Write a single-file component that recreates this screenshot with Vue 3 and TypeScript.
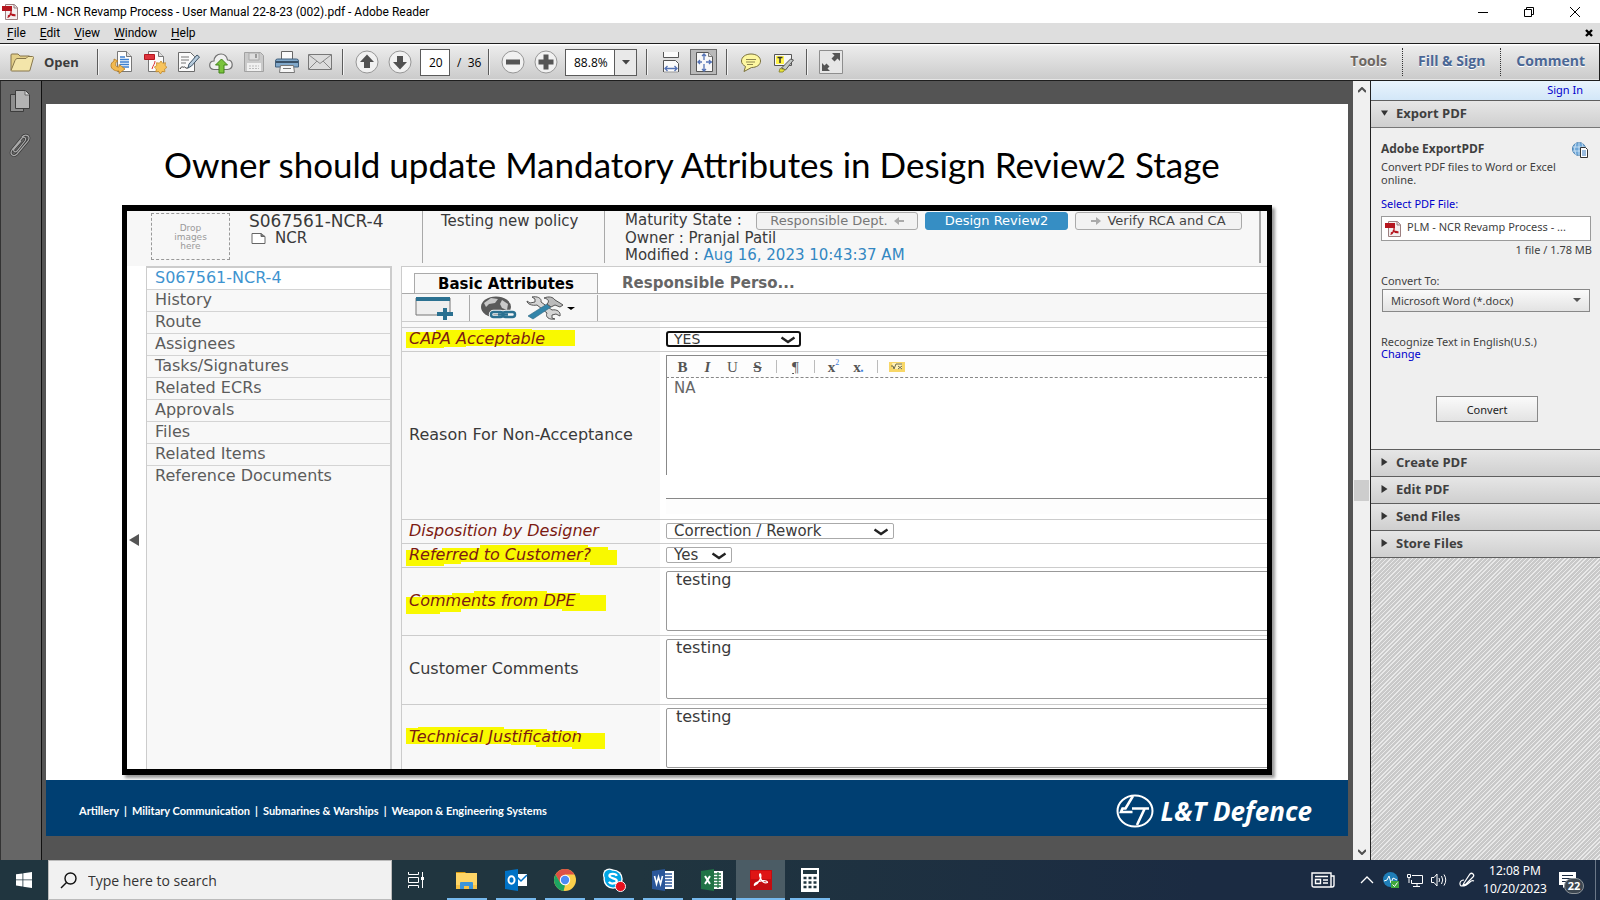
<script setup lang="ts">
import { ref } from 'vue'

interface Highlight { label: string; id: string; width: number; points: string }

const menus = ['File', 'Edit', 'View', 'Window', 'Help']
const sideItems = [
  'S067561-NCR-4', 'History', 'Route', 'Assignees', 'Tasks/Signatures',
  'Related ECRs', 'Approvals', 'Files', 'Related Items', 'Reference Documents',
]
const closedPanels = ['Create PDF', 'Edit PDF', 'Send Files', 'Store Files']
const businesses = ['Artillery', 'Military Communication', 'Submarines & Warships', 'Weapon & Engineering Systems']

const pageNumber = ref('20')
const zoomLevel = ref('88.8%')
const capa = ref('YES')
const disposition = ref('Correction / Rework')
const referred = ref('Yes')
const reason = ref('NA')
const dpeComments = ref('testing')
const customerComments = ref('testing')
const justification = ref('testing')
const search = ref('')

const marks: Record<string, Highlight> = {
  capa: { label: 'CAPA Acceptable', id: 'capa', width: 169, points: '0,3 30,3 30,1 75,1 75,0 126,0 126,1 169,1 169,17 60,17 60,18 38,18 38,19 0,19' },
  referred: { label: 'Referred to Customer?', id: 'referred', width: 211, points: '0,5 36,5 36,3 74,3 74,0 182,0 182,2 202,2 202,5 211,5 211,20 184,20 184,17 55,17 55,19 38,19 38,21 0,21' },
  dpe: { label: 'Comments from DPE', id: 'dpe', width: 200, points: '0,6 16,6 16,4 46,4 46,2 68,2 68,0 141,0 141,2 174,2 174,4 200,4 200,20 156,20 156,18 55,18 55,21 34,21 34,23 0,23' },
  tech: { label: 'Technical Justification', id: 'tech', width: 199, points: '0,1 12,1 12,0 98,0 98,2 141,2 141,4 171,4 171,6 199,6 199,22 166,22 166,20 130,20 130,18 105,18 105,17 0,17' },
}
</script>

<template>
  <div class="screen">
    <header class="titlebar">
      <svg class="pdf-icon" viewBox="0 0 16 16"><path d="M3.500.5h9l3 3v12h-12z" fill="#f4f0f0" stroke="#9c7f80" /><path d="M12 .5v3.500h3.500" fill="#ddd" stroke="#9c7f80" /><path d="M0 2h10v5H0z" fill="#b5161f" /><path d="M5.500 13.500c3-1.500 4-5 3.500-7M8 9c1.500 2 3.500 3 5.500 2.500M6 12c2-1.500 5-2 7.500-1" fill="none" stroke="#b5161f" stroke-width="1.300" /></svg>
      <h1>PLM - NCR Revamp Process - User Manual 22-8-23 (002).pdf - Adobe Reader</h1>
      <div class="win-buttons">
        <button aria-label="Minimize"><svg viewBox="0 0 12 12"><path d="M1 6.500h10" stroke="#000" /></svg></button>
        <button aria-label="Restore"><svg viewBox="0 0 12 12" fill="none" stroke="#000"><path d="M1.500 3.500h7v7h-7zM3.500 3.500v-2h7v7h-2" /></svg></button>
        <button aria-label="Close"><svg viewBox="0 0 12 12" stroke="#000"><path d="M1 1l10 10M11 1L1 11" /></svg></button>
      </div>
    </header>

    <nav class="menubar">
      <button v-for="m in menus" :key="m"><u>{{ m[0] }}</u>{{ m.slice(1) }}</button>
      <button class="doc-close" aria-label="Close document"><svg viewBox="0 0 8 8"><path d="M1 1l6 6M7 1L1 7" stroke="#000" stroke-width="2.400" /></svg></button>
    </nav>

    <div class="toolbar">
      <button class="open-btn">
        <svg viewBox="0 0 24 20" width="24" height="20"><path d="M1 18V3q0-1 1-1h6l2 2h9q1 0 1 1v3" fill="#e3cf88" stroke="#86754a" /><path d="M1 18.500L5 8.500q.5-1.500 2-2h9l2-2h4.500q1 0 1 1L20 18q0 1-1 1H2q-1 0-1-.5z" fill="#f3e5aa" stroke="#86754a" /></svg>
        Open
      </button>
      <i class="sep"></i>
      <button class="tool" aria-label="Convert"><svg viewBox="0 0 24 24"><path d="M7.500 1.500h9l5 5v15h-14z" fill="#fdfdfd" stroke="#777" /><path d="M16.500 1.500v5h5" fill="#ddd" stroke="#777" /><path d="M10 7h5M10 9.500h9M10 12h9M10 14.500h9M12 17h7" stroke="#3c7fcf" stroke-width="1.300" /><path d="M4 11c-4 2-4 7 0 9 2 1 3 1 5 1v2.500l6-4.500-6-4.500V17c-3 0-4-1-3-5l2-1-4-2z" fill="#f2b950" stroke="#b47b21" stroke-width=".8" /></svg></button>
      <button class="tool" aria-label="Create PDF"><svg viewBox="0 0 24 24"><path d="M5.500 1.500h10l5 5v15h-15z" fill="#fbfbfb" stroke="#777" /><path d="M15.500 1.500v5h5" fill="#ddd" stroke="#777" /><path d="M1.500 4.500h10v5h-10z" fill="#dd343d" stroke="#b4161f" /><path d="M9 19c1-4 3-5 3-8" stroke="#d33" fill="none" /><path d="M18 11l1.700 2.300 2.800-.6-.5 2.800 2 1.800-2.400 1.700.3 2.800-2.900-.3L17.500 24l-1.700-2.400-3 .2.600-2.800-2.100-1.900 2.400-1.500-.2-2.900 2.900.5z" fill="#f8c45c" stroke="#c48a2b" stroke-width=".8" /></svg></button>
      <button class="tool" aria-label="Sign"><svg viewBox="0 0 24 24"><path d="M2.500 2.500h12l4 4v15h-16z" fill="#fafafa" stroke="#6b6b6b" /><path d="M5 7h8M5 10h8M5 13h5" stroke="#777" /><path d="M4 19c2-4 3-1 4-2s1 2 4 1" fill="none" stroke="#333" /><path d="M12 18l1-4 8-9 2.500 2-8 9z" fill="#b7cbdc" stroke="#3f5568" /></svg></button>
      <button class="tool" aria-label="Upload"><svg viewBox="0 0 24 24"><path d="M5 19.500C-1 19.500-.5 11 5 11c0-4 3-7 7-7s6 3 6.500 6c6 0 6.500 9 0 9.500z" fill="#f0f0f0" stroke="#707070" stroke-width="1.200" /><path d="M12.500 9l6 6h-3.500v8h-5v-8H6.500z" fill="#79c33c" stroke="#43831b" /></svg></button>
      <button class="tool" aria-label="Save"><svg viewBox="0 0 24 24"><path d="M2.500 2.500h16l3 3v16h-19z" fill="#cacaca" stroke="#a2a2a2" /><path d="M7 3h10v7H7z" fill="#dedede" stroke="#aaa" /><path d="M13 4h2v4h-2z" fill="#999" /><path d="M5 13h14v8H5z" fill="#f0f0f0" /><path d="M7 16h10M7 18.500h10" stroke="#bbb" stroke-dasharray="2 1" /></svg></button>
      <button class="tool" aria-label="Print"><svg viewBox="0 0 24 24"><path d="M6.500 1.500h11v8h-11z" fill="#fafafa" stroke="#666" /><path d="M2.500 9h19q2 0 2 2v6H.5v-6q0-2 2-2z" fill="#81a8ca" stroke="#43617d" /><path d="M1 12h22" stroke="#3a5268" stroke-width="2" /><path d="M5.500 15.500h13l1 7h-15z" fill="#f7f7f7" stroke="#777" /><path d="M8 18.500h8" stroke="#777" /></svg></button>
      <button class="tool" aria-label="Email"><svg viewBox="0 0 24 24"><path d="M.5 4.500h23v15H.5z" fill="#dcdcdc" stroke="#777" /><path d="M1 5l11 8.500L23 5M1 19l8-8M23 19l-8-8" fill="none" stroke="#888" /></svg></button>
      <i class="sep"></i>
      <button class="tool" aria-label="Previous page"><svg viewBox="0 0 24 24"><circle cx="12" cy="12" r="11" fill="#f1f1f1" stroke="#969696" /><path d="M12 4.500l7 7.500h-4v6H9v-6H5z" fill="#505050" /></svg></button>
      <button class="tool" aria-label="Next page"><svg viewBox="0 0 24 24"><circle cx="12" cy="12" r="11" fill="#f1f1f1" stroke="#969696" /><path d="M12 19.500L5 12h4V6h6v6h4z" fill="#505050" /></svg></button>
      <input v-model="pageNumber" class="page-input" aria-label="Page number" />
      <span class="page-total">/&nbsp; 36</span>
      <i class="sep"></i>
      <button class="tool" aria-label="Zoom out"><svg viewBox="0 0 24 24"><circle cx="12" cy="12" r="11" fill="#f1f1f1" stroke="#969696" /><path d="M5 9.500h14v5H5z" fill="#555" /></svg></button>
      <button class="tool" aria-label="Zoom in"><svg viewBox="0 0 24 24"><circle cx="12" cy="12" r="11" fill="#f1f1f1" stroke="#969696" /><path d="M4.500 9.500h5v-5h5v5h5v5h-5v5h-5v-5h-5z" fill="#555" /></svg></button>
      <div class="zoom-combo">
        <input v-model="zoomLevel" aria-label="Zoom level" />
        <button aria-label="Zoom levels"><svg viewBox="0 0 8 5" width="8" height="5"><path d="M0 0h8L4 4.500z" fill="#444" /></svg></button>
      </div>
      <i class="sep"></i>
      <button class="tool" aria-label="Fit width"><svg viewBox="0 0 24 24" fill="#fbfbfb" stroke="#555"><path d="M4.500 2v5.500h15V2" /><path d="M4.500 22V10.500h12l3 3V22" /><path d="M5 22h14" stroke="#999" /><path d="M6 18.500h12M8.500 16L6 18.500 8.500 21M15.500 16l2.500 2.500-2.500 2.500" fill="none" stroke="#5573b5" stroke-width="1.300" /></svg></button>
      <button class="tool selected" aria-label="Fit page"><svg viewBox="0 0 24 24"><path d="M4.500 2.500h12l4 4v15h-16z" fill="#f8f8f8" stroke="#555" /><path d="M16.500 2.500v4h4" fill="#ddd" stroke="#777" /><path d="M12 4v6M12 14v7M5.500 12H10M14 12h6M10 6l2-2 2 2M10 19l2 2 2-2M8 10l-2 2 2 2M17 10l2 2-2 2" fill="none" stroke="#5573b5" stroke-width="1.300" /></svg></button>
      <i class="sep"></i>
      <button class="tool" aria-label="Comment"><svg viewBox="0 0 24 24"><path d="M12 4c5.500 0 9.500 3 9.500 7s-4 6.500-9 6.500L5 21.500l1.500-5C4 15 2.500 13.500 2.500 11c0-4 4-7 9.500-7z" fill="#fdf7a0" stroke="#79703b" /><path d="M7 9.500h10M7 12h9M8 14.500h6" stroke="#8d8650" /></svg></button>
      <button class="tool" aria-label="Highlight text"><svg viewBox="0 0 24 24"><path d="M2.500 4.500h17v11h-17z" fill="#f7f7f7" stroke="#555" /><path d="M4 6h8v8H4z" fill="#fff34a" /><path d="M5.500 7.500h5M8 7.500V13" stroke="#333" stroke-width="1.500" /><path d="M9.500 18l9-9 3 1-8 10z" fill="#c3c7c5" stroke="#555" /><path d="M8 18.500l5 1-2 2.500H7z" fill="#e9e43c" stroke="#807b22" stroke-width=".8" /></svg></button>
      <i class="sep"></i>
      <button class="tool" aria-label="Read mode"><svg viewBox="0 0 24 24"><path d="M.5.5h23v23H.500z" fill="#e6e6e6" stroke="#8e8e8e" /><path d="M13 3h8v8l-2.500-2.500-3 3-3-3 3-3zM3 21v-8l2.500 2.500 2-2 3 3-2 2L11 21z" fill="#555" /></svg></button>
      <div class="panes">
        <button class="tools-on">Tools</button>
        <button>Fill &amp; Sign</button>
        <button>Comment</button>
      </div>
    </div>

    <div class="workspace">
      <aside class="rail">
        <button aria-label="Page thumbnails"><svg viewBox="0 0 22 24" width="22" height="24"><path d="M1.500 5.500h13v17h-13z" fill="#8e8e8e" stroke="#3d3d3d" /><path d="M6.500 1.500h10l4 4v14h-14z" fill="#b3b3b3" stroke="#3d3d3d" /><path d="M16 2v4h4" fill="#ddd" stroke="#666" /></svg></button>
        <button aria-label="Attachments"><svg viewBox="0 0 22 24" width="22" height="24" fill="none"><path d="M3 17L13 5c2-2 5 0 3 3L8 18c-2 2-4 0-3-2l7-8M3 17c-3 5 2 7 5 4L19 8c3-5-2-8-6-4" stroke="#363636" stroke-width="2.600" /><path d="M3 17L13 5c2-2 5 0 3 3L8 18c-2 2-4 0-3-2l7-8M3 17c-3 5 2 7 5 4L19 8c3-5-2-8-6-4" stroke="#aaa" stroke-width="1.200" /></svg></button>
      </aside>

      <main class="canvas">
        <article class="slide">
          <h2>Owner should update Mandatory Attributes in Design Review2 Stage</h2>

          <section class="shot">
            <div class="record-head">
              <div class="drop">Drop<br />images<br />here</div>
              <div class="record-name">
                <strong>S067561-NCR-4</strong>
                <span><svg viewBox="0 0 15 11" width="15" height="11"><path d="M1 .5h9l4 3v7H1z" fill="#fff" stroke="#666" /><path d="M10 .5v3h4" fill="#777" stroke="#666" /></svg>NCR</span>
              </div>
              <div class="policy">Testing new policy</div>
              <div class="record-meta">
                <div class="state-line">
                  <span>Maturity State :</span>
                  <button class="chip dim">Responsible Dept. <svg viewBox="0 0 10 8" width="10" height="8"><path d="M0 4l5-4v3h5v2H5v3z" fill="#aaa" /></svg></button>
                  <button class="chip active">Design Review2</button>
                  <button class="chip"><svg viewBox="0 0 10 8" width="10" height="8"><path d="M10 4L5 0v3H0v2h5v3z" fill="#aaa" /></svg> Verify RCA and CA</button>
                </div>
                <div>Owner : Pranjal Patil</div>
                <div>Modified : <a href="#">Aug 16, 2023 10:43:37 AM</a></div>
              </div>
            </div>

            <div class="record-body">
              <button class="collapse" aria-label="Collapse"><svg viewBox="0 0 10 12" width="10" height="12"><path d="M10 0v12L0 6z" fill="#555" /></svg></button>
              <nav class="side">
                <a v-for="(s, i) in sideItems" :key="s" href="#" :class="{ current: i === 0 }">{{ s }}</a>
              </nav>
              <div class="content">
                <div class="tabs">
                  <button class="tab on">Basic Attributes</button>
                  <button class="tab">Responsible Perso...</button>
                </div>
                <div class="actions">
                  <button aria-label="New window"><svg viewBox="0 0 38 24" width="38" height="24"><path d="M1 2h34v17H1z" fill="#eee" stroke="#777" /><path d="M1 1h34v4H1z" fill="#2b7191" /><path d="M22 16h6v-4h4v4h6v4h-6v4h-4v-4h-6z" fill="#2b7191" /></svg></button>
                  <i></i>
                  <button aria-label="Web link"><svg viewBox="0 0 38 24" width="38" height="24"><ellipse cx="17" cy="11" rx="15" ry="10.500" fill="#5a5a5a" /><path d="M5 7l7-5 7 1-3 4-6 1-3 3zM23 4l6 4-1 6-5-2-2-4z" fill="#c9c9c9" /><g fill="none" stroke="#f7f7f7" stroke-width="4.500"><rect x="12" y="16" width="12" height="5" rx="2.500" /><rect x="24" y="16" width="12" height="5" rx="2.500" /></g><g fill="none" stroke="#2b7191" stroke-width="2.500"><rect x="12" y="16" width="12" height="5" rx="2.500" /><rect x="24" y="16" width="12" height="5" rx="2.500" /><path d="M19 18.500h10" /></g></svg></button>
                  <button aria-label="Tools"><svg viewBox="0 0 50 24" width="50" height="24"><path d="M1 5l3 2 5-1V3L6 1c5-1 10 1 9 5l11 8c5-1 9 2 8 6l-4-2-4 1v3l3 1c-6 1-10-2-8-6L11 9C6 10 1 8 1 5z" fill="#d5d5d5" stroke="#555" /><path d="M2 20L21 8l4 3L7 23z" fill="#3385aa" stroke="#2b6580" stroke-width=".6" /><path d="M18 2c5-2 9-1 11 2l5 3 3 2-3 2-5-2-4 2-4-3c3-3 1-5-3-6z" fill="#bbb" stroke="#555" /><path d="M41 11h8l-4 3z" fill="#000" /></svg></button>
                  <i></i>
                </div>

                <form class="attrs" @submit.prevent>
                  <div class="gap-label"></div><div class="gap-field"></div>

                  <div class="label must"><label :for="marks.capa.id"><svg :width="marks.capa.width" height="19" class="mark"><polygon :points="marks.capa.points" fill="#f9f900" /></svg><span>{{ marks.capa.label }}</span></label></div>
                  <div class="field">
                    <div class="pick focus capa"><select id="capa" v-model="capa"><option>YES</option><option>NO</option></select><svg viewBox="0 0 16 8"><path d="M1.500 1.500L8 6l6.500-4.500" fill="none" stroke="#222" stroke-width="2.400" /></svg></div>
                  </div>

                  <div class="label"><label for="reason">Reason For Non-Acceptance</label></div>
                  <div class="field">
                    <div class="editor">
                      <div class="editor-tools">
                        <button type="button"><b>B</b></button><button type="button"><b><em>I</em></b></button><button type="button">U</button><button type="button"><s><b>S</b></s></button><i></i>
                        <button type="button" class="para"><u>¶</u></button><i></i>
                        <button type="button"><b>x</b><sup>2</sup></button><button type="button"><b>x</b><sub>▪</sub></button><i></i>
                        <button type="button" aria-label="Symbols"><svg viewBox="0 0 16 10" width="16" height="10"><path d="M0 0h16v10H0z" fill="#f8d767" /><path d="M3 1h10v6H4z" fill="#fff1b8" /><path d="M2 4h2l1 3 2-5h6M9 4l4 3M13 4l-4 3" fill="none" stroke="#6d6a48" /></svg></button>
                      </div>
                      <textarea id="reason" v-model="reason"></textarea>
                      <div class="editor-foot"></div>
                    </div>
                  </div>

                  <div class="label must"><label for="disposition">Disposition by Designer</label></div>
                  <div class="field">
                    <div class="pick disposition"><select id="disposition" v-model="disposition"><option>Correction / Rework</option></select><svg viewBox="0 0 16 8"><path d="M1.500 1.500L8 6l6.500-4.500" fill="none" stroke="#222" stroke-width="2.400" /></svg></div>
                  </div>

                  <div class="label must"><label :for="marks.referred.id"><svg :width="marks.referred.width" height="21" class="mark"><polygon :points="marks.referred.points" fill="#f9f900" /></svg><span>{{ marks.referred.label }}</span></label></div>
                  <div class="field">
                    <div class="pick referred"><select id="referred" v-model="referred"><option>Yes</option><option>No</option></select><svg viewBox="0 0 16 8"><path d="M1.500 1.500L8 6l6.500-4.500" fill="none" stroke="#222" stroke-width="2.400" /></svg></div>
                  </div>

                  <div class="label must"><label :for="marks.dpe.id"><svg :width="marks.dpe.width" height="23" class="mark"><polygon :points="marks.dpe.points" fill="#f9f900" /></svg><span>{{ marks.dpe.label }}</span></label></div>
                  <div class="field"><textarea id="dpe" v-model="dpeComments" class="memo"></textarea></div>

                  <div class="label"><label for="customer">Customer Comments</label></div>
                  <div class="field"><textarea id="customer" v-model="customerComments" class="memo"></textarea></div>

                  <div class="label must"><label :for="marks.tech.id"><svg :width="marks.tech.width" height="23" class="mark"><polygon :points="marks.tech.points" fill="#f9f900" /></svg><span>{{ marks.tech.label }}</span></label></div>
                  <div class="field"><textarea id="tech" v-model="justification" class="memo"></textarea></div>
                </form>
              </div>
            </div>
          </section>

          <footer class="slide-foot">
            <p><template v-for="(b, i) in businesses" :key="b"><span v-if="i">|</span><span>{{ b }}</span></template></p>
            <div class="brand">
              <svg viewBox="0 0 38 34" width="38" height="34"><ellipse cx="19" cy="17" rx="17.500" ry="15.500" fill="none" stroke="#fff" stroke-width="2" /><path d="M17 2L9.500 14.500h-3L5 18h11.500M16 14.500h17M28.500 15L21 31" fill="none" stroke="#fff" stroke-width="2.600" /></svg>
              <span>L&amp;T Defence</span>
            </div>
          </footer>
        </article>
      </main>

      <div class="scrollbar">
        <svg viewBox="0 0 8 6" width="8" height="6"><path d="M0 5l4-4 4 4" fill="none" stroke="#505050" stroke-width="2" /></svg>
        <div class="track"><div class="thumb"></div></div>
        <svg viewBox="0 0 8 6" width="8" height="6"><path d="M0 1l4 4 4-4" fill="none" stroke="#505050" stroke-width="2" /></svg>
      </div>

      <aside class="panel">
        <div class="signin"><a href="#">Sign In</a></div>
        <button class="fold opened"><svg viewBox="0 0 8 6" width="8" height="6"><path d="M0 0h8L4 6z" fill="#333" /></svg>Export PDF</button>
        <div class="export">
          <svg class="globe" viewBox="0 0 17 16" width="17" height="16"><circle cx="7" cy="7" r="6.500" fill="#6ea7d8" stroke="#4a7fae" /><path d="M1 5h12M1 9h12M7 0v14M4 1q-3 6 0 12M10 1q3 6 0 12" fill="none" stroke="#e4f0fa" stroke-width=".7" /><path d="M8.500 5.500h5l2 2v8h-7z" fill="#fff" stroke="#333" /><path d="M10 9h4M10 11h4M10 13h4" stroke="#3779bd" /></svg>
          <h3>Adobe ExportPDF</h3>
          <p class="desc">Convert PDF files to Word or Excel online.</p>
          <p class="select-file"><a href="#">Select PDF File:</a></p>
          <div class="file">
            <svg class="pdf-icon" viewBox="0 0 16 16"><path d="M3.500.5h9l3 3v12h-12z" fill="#f4f0f0" stroke="#9c7f80" /><path d="M12 .5v3.500h3.500" fill="#ddd" stroke="#9c7f80" /><path d="M0 2h10v5H0z" fill="#b5161f" /><path d="M5.500 13.500c3-1.500 4-5 3.500-7M8 9c1.500 2 3.500 3 5.500 2.500M6 12c2-1.500 5-2 7.500-1" fill="none" stroke="#b5161f" stroke-width="1.300" /></svg>
            <span>PLM - NCR Revamp Process - ...</span>
          </div>
          <p class="size">1 file / 1.78 MB</p>
          <label for="format">Convert To:</label>
          <div class="format"><select id="format"><option>Microsoft Word (*.docx)</option></select><svg viewBox="0 0 8 5" width="8" height="5"><path d="M0 0h8L4 4z" fill="#555" /></svg></div>
          <p class="recognize">Recognize Text in English(U.S.)<br /><a href="#">Change</a></p>
          <button class="convert">Convert</button>
        </div>
        <button v-for="p in closedPanels" :key="p" class="fold"><svg viewBox="0 0 6 8" width="6" height="8"><path d="M0 0v8l6-4z" fill="#333" /></svg>{{ p }}</button>
        <div class="hatch"></div>
      </aside>
    </div>

    <footer class="taskbar">
      <button class="start" aria-label="Start"><svg viewBox="0 0 16 16" width="16" height="16" fill="#fff"><path d="M0 2.300l6.500-.9v6.100H0zM7.300 1.300L16 0v7.500H7.300zM0 8.300h6.500v6.200L0 13.600zM7.300 8.300H16V16l-8.700-1.300z" /></svg></button>
      <label class="searchbox"><svg viewBox="0 0 17 17" width="17" height="17" fill="none" stroke="#111" stroke-width="1.400"><circle cx="10.500" cy="6.500" r="5.500" /><path d="M6.500 10.500L1 16" /></svg><input v-model="search" placeholder="Type here to search" aria-label="Search" /></label>
      <button class="app plain" aria-label="Task view"><svg viewBox="0 0 16 16" width="16" height="16" fill="none" stroke="#fff"><path d="M.5 0v2.500h10V0M.5 5.500h10v5H.5zM.5 16v-2.500h10V16M14.500 0v16" /><path d="M13 5h3v3h-3z" fill="#fff" stroke="none" /></svg></button>
      <button class="app" aria-label="File Explorer"><svg viewBox="0 0 24 24"><path d="M1 4h9l2 2H1z" fill="#d99a0f" /><path d="M1 5h21v16H1z" fill="#ffd566" /><path d="M1 17h21v4H1z" fill="#f7c245" /><path d="M5 21v-6q0-1 1-1h11q1 0 1 1v6h-4v-3H9v3z" fill="#3b95db" /></svg></button>
      <button class="app" aria-label="Outlook"><svg viewBox="0 0 24 24"><path d="M12 6h11v12H12z" fill="#fff" /><path d="M12 8l5 5 6-6" fill="none" stroke="#0072c6" stroke-width="1.500" /><path d="M1 3l13-2v22L1 21z" fill="#0072c6" /><ellipse cx="7.500" cy="12" rx="3" ry="3.800" fill="none" stroke="#fff" stroke-width="2" /></svg></button>
      <button class="app" aria-label="Chrome"><svg viewBox="0 0 24 24"><circle cx="12" cy="12" r="11" fill="#fbd04b" /><path d="M2.500 6.500A11 11 0 0 1 21.500 6.500H12L7 15z" fill="#dd5144" /><path d="M2.500 6.500L7.200 14.800 12 17.500l-1.500 5.400A11 11 0 0 1 2.500 6.500z" fill="#1da462" /><circle cx="12" cy="12" r="5.200" fill="#fff" /><circle cx="12" cy="12" r="4.200" fill="#4c8bf5" /></svg></button>
      <button class="app" aria-label="Skype"><svg viewBox="0 0 26 26"><circle cx="8" cy="7.500" r="7" fill="#fff" /><circle cx="12" cy="12" r="10.500" fill="#fff" /><circle cx="8" cy="7.500" r="5.700" fill="#00a5e5" /><circle cx="12" cy="12" r="9" fill="#00a5e5" /><path d="M16 8.500c-1-3-8-3-8 0s8 2.500 8 5.500-7 4-8.500 1" fill="none" stroke="#fff" stroke-width="2.400" /><circle cx="20" cy="20" r="5.500" fill="#e8101e" stroke="#fff" /></svg></button>
      <button class="app" aria-label="Word"><svg viewBox="0 0 24 24"><path d="M12 3h11v18H12z" fill="#fff" /><path d="M14 6h7M14 9h7M14 12h7M14 15h7M14 18h7" stroke="#2b579a" stroke-width="1.300" /><path d="M1 3l13-2v22L1 21z" fill="#2b579a" /><path d="M3.500 8l2 8 2-7 2 7 2-8" fill="none" stroke="#fff" stroke-width="1.600" /></svg></button>
      <button class="app" aria-label="Excel"><svg viewBox="0 0 24 24"><path d="M12 3h11v18H12z" fill="#fff" /><path d="M14 6h7M14 9h7M14 12h7M14 15h7M14 18h7M18 4v16" stroke="#217346" stroke-width="1.300" /><path d="M1 3l13-2v22L1 21z" fill="#217346" /><path d="M5 8l5 8M10 8l-5 8" fill="none" stroke="#fff" stroke-width="2" /></svg></button>
      <button class="app running" aria-label="Adobe Reader"><svg viewBox="0 0 24 24"><path d="M1 2h22v20H1z" fill="#c40c10" /><path d="M2 3h20v8H2z" fill="#df1515" /><path d="M6 17c4-2 7-8 5.500-11-1.500-1-1 3 0 4 1 3 4 6 7 4.500 0-3-8-2-12 .5-2 2-1 3-.5 2z" fill="none" stroke="#fff" stroke-width="1.200" /></svg></button>
      <button class="app" aria-label="Calculator"><svg viewBox="0 0 24 24"><path d="M3 0h18v24H3z" fill="#fff" /><path d="M5 2h14v4H5z" fill="#20353f" /><path d="M5.500 10h13M5.500 14.500h13M5.500 19h13" stroke="#20353f" stroke-width="2.600" stroke-dasharray="3 2" /></svg></button>

      <div class="tray">
        <button class="news" aria-label="News"><svg viewBox="0 0 24 16" width="24" height="16" fill="none" stroke="#fff" stroke-width="1.400"><path d="M1 1h19v14H3q-2 0-2-2zM20 4h3v9q0 2-2 2h-2" /><path d="M4 4.500h13M12 8h5M12 11h5M4.500 7.500h5v4h-5z" /></svg></button>
        <button aria-label="Show hidden icons"><svg viewBox="0 0 16 16" width="16" height="16" fill="none" stroke="#fff" stroke-width="1.300"><path d="M2 11l6-6 6 6" /></svg></button>
        <button aria-label="Monitor agent"><svg viewBox="0 0 16 16" width="16" height="16"><circle cx="7.500" cy="7.500" r="7.500" fill="#1f7eb8" /><path d="M1 9l3-1 2-4 2 7 2-5 4 2" fill="none" stroke="#fff" /><path d="M8 9h8v7H8z" fill="#3fa63c" /><path d="M9.500 12.500l2 2 3-4" fill="none" stroke="#fff" /></svg></button>
        <button aria-label="Network"><svg viewBox="0 0 16 16" width="16" height="16" fill="none" stroke="#fff"><path d="M5 3.500h10.500v8h-11V8M10 12v2.500M6 14.500h7M.5 2.500h3v3h-3zM2 6v5" /></svg></button>
        <button aria-label="Volume"><svg viewBox="0 0 16 16" width="16" height="16" fill="none" stroke="#fff"><path d="M.5 5.500H3L6 2v12l-3-3.500H.500zM8 6q1 2 0 4M10.500 4q2.500 4 0 8M13 2.500q3.500 5.500 0 11" /></svg></button>
        <button class="pen" aria-label="Ink workspace"><svg viewBox="0 0 16 16" width="16" height="16" fill="none" stroke="#fff" stroke-width="1.200"><path d="M5 11L11 2q1.500-1.500 3 0t0 3L7 12l-3 1zM5 8C0 8 0 14 3 14s5-1 8-4q2-2 4-1" /></svg></button>
        <div class="clock"><span>12:08 PM</span><span>10/20/2023</span></div>
        <button class="notify" aria-label="Notifications"><svg viewBox="0 0 17 16" width="17" height="16"><path d="M0 0h17v13h-9l-4 3v-3H0z" fill="#fff" /><path d="M3 3.500h11M3 6.500h11M3 9.500h7" stroke="#1b2b42" stroke-width="1.200" /></svg><span>22</span></button>
        <i class="desk"></i>
      </div>
    </footer>
  </div>
</template>

<style>
body { margin: 0; background: #545454; }
</style>

<style scoped>
* { box-sizing: border-box; }
button { background: none; border: 0; padding: 0; margin: 0; font: inherit; color: inherit; cursor: default; }
a { text-decoration: none; color: #0000cc; }
p, h1, h2, h3 { margin: 0; font-weight: 400; }
svg { display: block; flex: none; }
input, select, textarea { font: inherit; color: inherit; margin: 0; border: 0; outline: 0; border-radius: 0; }
.screen { min-height: 100vh; display: flex; flex-direction: column; font-family: "Open Sans", "Noto Sans", sans-serif; font-size: 12px; color: #000; overflow: hidden; }
.pdf-icon { width: 16px; height: 16px; }

.titlebar { height: 23px; background: #fff; display: flex; align-items: center; padding-left: 2px; gap: 5px; }
.titlebar h1 { font-family: Roboto, sans-serif; font-size: 12px; line-height: 16px; white-space: nowrap; }
.win-buttons { margin-left: auto; display: flex; padding-right: 2px; }
.win-buttons button { width: 46px; height: 20px; display: flex; align-items: center; justify-content: center; }
.win-buttons svg { width: 12px; height: 12px; }

.menubar { height: 20px; background: #dedede; display: flex; align-items: center; padding-left: 7px; gap: 14px; font-family: Roboto, sans-serif; line-height: 16px; }
.menubar u { text-underline-offset: 2px; }
.doc-close { margin-left: auto; margin-right: 7px; }
.doc-close svg { width: 8px; height: 8px; }

.toolbar { height: 38px; border: 1px solid #1e1e1e; border-width: 1px 1px 1px 0; background: linear-gradient(#fff 1px, #ececec 2px, #cbcbcb 35px, #fff 36px); display: flex; align-items: center; padding: 0 12px 0 10px; }
.open-btn { display: flex; align-items: center; gap: 10px; width: 81px; font-weight: 700; font-size: 13px; color: #3c3c3c; }
.sep { flex: none; width: 2px; height: 26px; margin: 0 6px; background: #5c5c5c; border-right: 1px solid #f3f3f3; }
.tool { flex: none; width: 33px; height: 26px; display: flex; align-items: center; justify-content: center; }
.tool svg { width: 24px; height: 24px; }
.tool.selected { width: 27px; margin: 0 3px; background: #b9b9b9; border: 1px solid #6b6b6b; }
.page-input { width: 30px; height: 27px; margin-left: 4px; border: 1px solid #5b5b5b; background: #fff; padding: 0 0 0 8px; flex: none; }
.page-total { width: 32px; padding-left: 7px; white-space: nowrap; }
.zoom-combo { display: flex; width: 72px; height: 27px; margin: 0 3px; border: 1px solid #5b5b5b; background: #fff; flex: none; }
.zoom-combo input { width: 48px; padding: 0 0 0 8px; }
.zoom-combo button { flex: 1; border-left: 1px solid #5b5b5b; background: #e9e9e9; display: flex; align-items: center; justify-content: center; }
.panes { margin-left: auto; display: flex; font-weight: 700; font-size: 14px; line-height: 18px; color: #4b6795; white-space: nowrap; }
.panes button { height: 28px; padding: 0 15px 2px; border-left: 1px dotted #333; text-shadow: 0 1px #fff; }
.panes .tools-on { color: #6d6762; border: 0; }
.panes button:last-child { padding-right: 2px; }

.workspace { flex: 1; display: flex; background: #545454; }
.rail { width: 42px; background: #666; border-left: 1px solid #333; border-right: 1px solid #111; padding: 8px 0 0 8px; display: flex; flex-direction: column; gap: 20px; align-items: flex-start; }
.canvas { flex: 1; min-width: 0; padding: 23px 5px 24px 4px; }
.slide { background: #fff; }
.slide h2 { height: 101px; padding: 36px 0 0 118px; font-family: Lato, "Open Sans", sans-serif; font-size: 35px; line-height: 48px; white-space: nowrap; }

.shot { margin: 0 76px 5px; border: solid #000; border-width: 6px 5px; box-shadow: 3px 3px 3px #999; overflow: hidden; font-family: "DejaVu Sans", sans-serif; font-size: 15px; line-height: 18px; color: #3a3a3a; }
.record-head { display: flex; height: 55px; background: #f7f7f7; white-space: nowrap; border-bottom: 1px solid #f7f7f7; }
.drop { width: 79px; height: 47px; margin: 2px 19px 0 24px; border: 1px dashed #999; text-align: center; font-size: 9px; line-height: 9px; padding-top: 10px; color: #999; flex: none; }
.record-name { width: 174px; padding-top: 1px; display: flex; flex-direction: column; height: 52px; border-right: 1px solid #a9a9a9; flex: none; }
.record-name strong { font-weight: 400; font-size: 17px; line-height: 18px; }
.record-name span { display: flex; align-items: center; gap: 9px; padding-left: 2px; line-height: 16px; }
.policy { width: 182px; height: 52px; padding: 1px 0 0 18px; border-right: 1px solid #a9a9a9; flex: none; }
.record-meta { flex: 1; height: 52px; margin-right: 6px; padding: 0 0 0 20px; border-right: 2px solid #a9a9a9; line-height: 17px; }
.record-meta a { color: #3387c2; }
.state-line { display: flex; align-items: center; height: 19px; }
.state-line > span { width: 131px; }
.chip { display: flex; align-items: center; justify-content: center; gap: 6px; height: 18px; margin-right: 7px; border: 1px solid #aaa; border-radius: 3px; background: #f2f2f2; font-size: 13px; line-height: 14px; color: #444; }
.chip.dim { width: 162px; color: #777; }
.chip.active { width: 143px; background: #368ec4; border-color: #368ec4; color: #fff; }
.chip:last-child { width: 167px; }

.record-body { display: flex; height: 503px; }
.collapse { width: 19px; padding: 268px 0 0 2px; display: flex; align-items: flex-start; flex: none; }
.side { width: 246px; flex: none; border: 1px solid #ccc; border-width: 2px 2px 0 1px; background: #f8f8f8; display: flex; flex-direction: column; font-size: 16px; }
.side a { height: 22px; line-height: 20px; padding-left: 8px; border-bottom: 1px solid #d4d4d4; color: #5c5c5c; }
.side a:last-child { border: 0; }
.side .current { background: #fff; color: #3f94d0; }
.content { flex: 1; min-width: 0; margin-left: 9px; border-left: 1px solid #ccc; border-top: 1px solid #ccc; box-shadow: -9px 0 #f7f7f7; }
.tabs { height: 27px; display: flex; align-items: flex-end; padding-left: 12px; border-bottom: 1px solid #aaa; font-weight: 700; font-size: 15px; }
.tab { height: 20px; line-height: 18px; padding: 0 24px; color: #666; white-space: nowrap; }
.tab.on { width: 184px; padding: 0; border: 1px solid #aaa; border-bottom: 0; background: #f8f8f8; color: #000; }
.actions { height: 28px; background: #f7f7f7; border-bottom: 1px solid #ccc; display: flex; align-items: center; padding-left: 13px; }
.actions i { width: 1px; height: 26px; background: #aaa; margin-left: 16px; margin-right: 9px; }
.actions button + button { margin-left: 9px; }
.actions button + button + i { margin-left: 21px; }

.attrs { display: grid; grid-template-columns: 258px minmax(0, 1fr); grid-template-rows: 6px 24px 168px 24px 24px 68px 69px 65px; font-size: 16px; }
.gap-label, .gap-field, .label, .field { border-bottom: 1px solid #ccc; }
.gap-label, .label { background: #f8f8f8; }
.label { display: flex; align-items: center; padding-left: 7px; white-space: nowrap; }
.label label { position: relative; line-height: 18px; padding-bottom: 2px; }
.label span { position: relative; }
.label:nth-last-child(2), .field:last-child { border-bottom: 0; }
.must { font-style: italic; color: #7c1a12; }
.mark { position: absolute; left: -3px; top: -1px; }
.field { padding: 3px 0 0 6px; overflow: hidden; }
.pick { position: relative; height: 16px; border: 1px solid #aaa; border-radius: 2px; background: #fff; font-size: 15px; }
.pick select { appearance: none; display: block; width: 100%; height: 14px; background: none; padding: 0 0 0 7px; line-height: 14px; }
.pick svg { position: absolute; right: 4px; top: 4px; width: 16px; height: 8px; }
.capa { width: 135px; }
.focus { border: 2px solid #111; border-radius: 3px; font-size: 14px; }
.focus select { height: 12px; line-height: 12px; padding-left: 6px; }
.focus svg { top: 3px; right: 3px; }
.disposition { width: 228px; }
.referred { width: 66px; }
.editor { height: 160px; display: flex; flex-direction: column; }
.editor-tools { height: 22px; border-top: 1px solid #888; border-left: 1px solid #888; background: #fdfdfd; display: flex; align-items: center; padding-left: 3px; font-family: "Liberation Serif", serif; font-size: 15px; line-height: 16px; color: #555; }
.editor-tools button { width: 25px; display: flex; justify-content: center; align-items: center; }
.editor-tools i { width: 1px; height: 13px; background: #bbb; margin: 0 6px; }
.editor-tools sup, .editor-tools sub { font-size: 8px; line-height: 8px; color: #3d7fdc; }
.editor-tools sup { align-self: flex-start; }
.editor-tools sub { align-self: flex-end; }
.editor textarea { display: block; width: 100%; height: 98px; resize: none; border-top: 1px dashed #888; border-left: 1px solid #888; padding: 1px 7px; background: #fff; color: #666; overflow: hidden; font-size: 15px; }
.editor-foot { margin-top: 23px; height: 16px; border-top: 1px solid #888; background: #fdfdfd; }
.memo { display: block; width: 110%; height: 60px; resize: none; border: 1px solid #999; border-radius: 2px; padding: 0 9px; line-height: 16px; background: #fff; overflow: hidden; }

.slide-foot { height: 56px; background: #003f72; display: flex; align-items: center; justify-content: space-between; padding: 6px 36px 0 33px; color: #fff; }
.slide-foot p { display: flex; gap: 5px; font-family: Lato, sans-serif; font-weight: 700; font-size: 11px; line-height: 16px; white-space: nowrap; }
.brand { display: flex; align-items: center; gap: 7px; font-size: 26px; line-height: 30px; font-weight: 700; font-style: italic; white-space: nowrap; }

.scrollbar { width: 17px; background: #f0f0f0; display: flex; flex-direction: column; align-items: center; padding: 6px 0 5px; }
.track { flex: 1; align-self: stretch; padding: 387px 1px 0; }
.thumb { height: 21px; background: #cdcdcd; }

.panel { width: 230px; border-left: 1px solid #222; background: #efefef; display: flex; flex-direction: column; color: #3f3f3f; font-family: "Noto Sans", "Open Sans", sans-serif; font-size: 11px; line-height: 13px; flex: none; }
.signin { height: 19px; background: linear-gradient(#e9f4fd, #d3e7f8); text-align: right; padding: 2px 17px 0 0; }
.fold { flex: none; height: 27px; border-top: 1px solid #5e5e5e; background: linear-gradient(#e6e6e6, #cfcfcf); display: flex; align-items: center; gap: 8px; padding: 0 0 2px 10px; font-size: 13px; font-weight: 700; font-family: "Open Sans", sans-serif; }
.fold svg { width: 7px; }
.opened { height: 28px; border-bottom: 1px solid #777; }
.export { position: relative; height: 321px; padding: 13px 9px 0 10px; }
.export h3 { font-family: "Open Sans", sans-serif; font-weight: 700; font-size: 12px; line-height: 16px; }
.globe { position: absolute; right: 11px; top: 14px; }
.desc { margin-top: 3px; width: 190px; }
.select-file { margin-top: 11px; }
.file { margin-top: 6px; height: 25px; border: 1px solid #9a9a9a; background: #fff; display: flex; align-items: center; gap: 6px; padding-left: 3px; white-space: nowrap; }
.file span { padding-bottom: 4px; }
.size { text-align: right; margin: 2px -1px 18px 0; }
.format { position: relative; margin: 2px 1px 24px; }
.format select { appearance: none; display: block; width: 100%; height: 23px; border: 1px solid #888; padding: 0 8px; background: linear-gradient(#fafafa, #e3e3e3); }
.format svg { position: absolute; right: 9px; top: 9px; }
.recognize { line-height: 12px; white-space: nowrap; }
.convert { display: block; width: 102px; height: 26px; margin: 36px 0 0 55px; border: 1px solid #888; background: linear-gradient(#fafafa, #e3e3e3); color: #222; }
.hatch { flex: 1; border-top: 1px solid #5e5e5e; background: repeating-linear-gradient(135deg, #c9c9c9 0 2px, #e9e9e9 2px 3px); }

.taskbar { height: 40px; flex: none; background: linear-gradient(90deg, #20353f, #20353f 40%, #1b2b42 75%); display: flex; color: #fff; }
.start { width: 48px; display: flex; align-items: center; justify-content: center; }
.searchbox { width: 344px; border: 1px solid #bbb; background: #f1f1f1; display: flex; align-items: center; gap: 11px; padding-left: 11px; }
.searchbox input { width: 280px; background: none; padding: 0; font-size: 14px; color: #222; }
.searchbox input::placeholder { color: #333; opacity: 1; }
.app { width: 49px; display: flex; align-items: center; justify-content: center; background: linear-gradient(#76b9ed, #76b9ed) center bottom / 40px 2px no-repeat; }
.app svg { width: 24px; height: 24px; }
.app.plain { width: 48px; margin-right: 2px; background: none; }
.app.plain svg { width: 16px; height: 16px; }
.app.running { background: linear-gradient(#76b9ed, #76b9ed) center bottom / 49px 2px no-repeat #4b5c65; }
.tray { margin-left: auto; display: flex; align-items: center; }
.tray button { width: 24px; display: flex; justify-content: center; }
.tray .news { margin-right: 20px; }
.tray .pen { margin-left: 4px; }
.clock { width: 72px; display: flex; flex-direction: column; align-items: center; font-size: 12px; line-height: 18px; font-family: "Noto Sans", sans-serif; }
.tray .notify { position: relative; width: 44px; justify-content: flex-start; padding-left: 8px; }
.notify span { position: absolute; left: 13px; top: 6px; width: 20px; height: 16px; border-radius: 8px; background: #3c4650; border: 1px solid #8d949a; font-size: 11px; line-height: 14px; font-weight: 700; text-align: center; }
.desk { width: 5px; height: 40px; border-left: 1px solid #6b7787; }
</style>
